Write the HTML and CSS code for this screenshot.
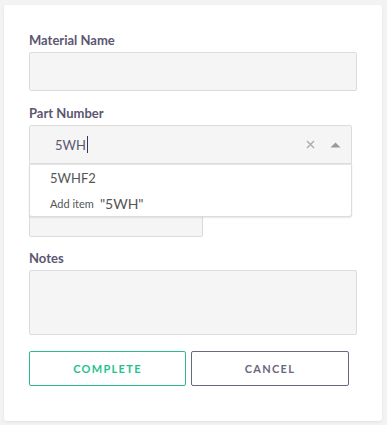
FILE: index.html
```html
<!DOCTYPE html>
<html>
<head>
<meta charset="utf-8">
<link rel="stylesheet" href="styles.css">
</head>
<body>
<div class="card">
  <div class="field">
    <label class="label">Material Name</label>
    <div class="input"></div>
  </div>
  <div class="field">
    <label class="label">Part Number</label>
    <div class="select-wrap">
      <div class="select">
        <span class="value">5WH<span class="caret"></span></span>
        <span class="clear">
          <svg width="9" height="9" viewBox="0 0 9 9"><path d="M1 1 L8 8 M8 1 L1 8" stroke="#a9a9a9" stroke-width="1.3" fill="none"/></svg>
        </span>
        <span class="arrow">
          <svg width="11" height="6" viewBox="0 0 11 6"><path d="M0.5 5.5 L5.5 0.5 L10.5 5.5 Z" fill="#9a9a9a"/></svg>
        </span>
      </div>
      <div class="menu">
        <div class="option">5WHF2</div>
        <div class="option add"><span class="add-label">Add item</span><span class="add-value">"5WH"</span></div>
      </div>
    </div>
  </div>
  <div class="field">
    <label class="label hidden-label">Quantity</label>
    <div class="input half"></div>
  </div>
  <div class="field">
    <label class="label">Notes</label>
    <div class="input textarea"></div>
  </div>
  <div class="actions">
    <button class="btn btn-complete">COMPLETE</button>
    <button class="btn btn-cancel">CANCEL</button>
  </div>
</div>
</body>
</html>
```
FILE: styles.css
```css
html, body {
  margin: 0;
  padding: 0;
  background: #f3f3f3;
}
body {
  padding: 5px 5px 4px 4px;
  font-family: Lato, "Open Sans", sans-serif;
}
.card {
  width: 378px;
  box-sizing: border-box;
  background: #ffffff;
  border-radius: 3px;
  box-shadow: 0 1px 3px rgba(0,0,0,0.08);
  padding: 26px 25px 35px 25px;
}
.field {
  margin-bottom: 13px;
}
.field:nth-child(3) {
  margin-bottom: 12px;
}
.field:nth-child(4) {
  margin-bottom: 16px;
}
.label {
  display: block;
  font-size: 13px;
  line-height: 18px;
  font-weight: 700;
  color: #5b5770;
  margin-bottom: 3px;
}
.hidden-label {
  visibility: hidden;
}
.input {
  height: 39px;
  box-sizing: border-box;
  background: #f5f5f5;
  border: 1px solid #dcdcdc;
  border-radius: 2px;
}
.input.half {
  width: 174px;
}
.input.textarea {
  height: 65px;
}
.select-wrap {
  position: relative;
  width: 323px;
}
.select {
  height: 39px;
  box-sizing: border-box;
  background: #f5f5f5;
  border: 1px solid #dcdcdc;
  border-radius: 2px 2px 0 0;
  display: flex;
  align-items: center;
  padding: 0 10px 0 25px;
}
.value {
  flex: 1;
  font-size: 13px;
  color: #5b5770;
  display: flex;
  align-items: center;
}
.caret {
  display: inline-block;
  width: 1px;
  height: 17px;
  background: #3c3552;
  margin-left: 1px;
}
.clear {
  display: flex;
  margin-right: 15px;
}
.arrow {
  display: flex;
}
.menu {
  position: absolute;
  top: 39px;
  left: 0;
  right: 0;
  z-index: 2;
  background: #ffffff;
  border: 1px solid #dcdcdc;
  border-top: 1px solid #e6e6e6;
  border-radius: 0 0 3px 3px;
  box-shadow: 0 1px 2px rgba(0,0,0,0.1);
  height: 53px;
  box-sizing: border-box;
}
.option {
  font-size: 13px;
  color: #555;
  padding: 0 0 0 20px;
  height: 26px;
  display: flex;
  align-items: center;
}
.option.add {
  height: 25px;
}
.add-label {
  font-size: 11px;
  color: #555;
  margin-right: 6px;
}
.add-value {
  font-size: 14px;
  color: #555;
}
.actions {
  display: flex;
  gap: 5px;
}
.btn {
  height: 35px;
  background: #fff;
  border-radius: 2px;
  font-family: Lato, "Open Sans", sans-serif;
  font-size: 11px;
  font-weight: 700;
  letter-spacing: 1.3px;
  padding: 0;
}
.btn-complete {
  width: 157px;
  border: 1px solid #2cbb86;
  color: #1fc28d;
}
.btn-cancel {
  width: 158px;
  border: 1px solid #6b6780;
  color: #6b6780;
}
```
